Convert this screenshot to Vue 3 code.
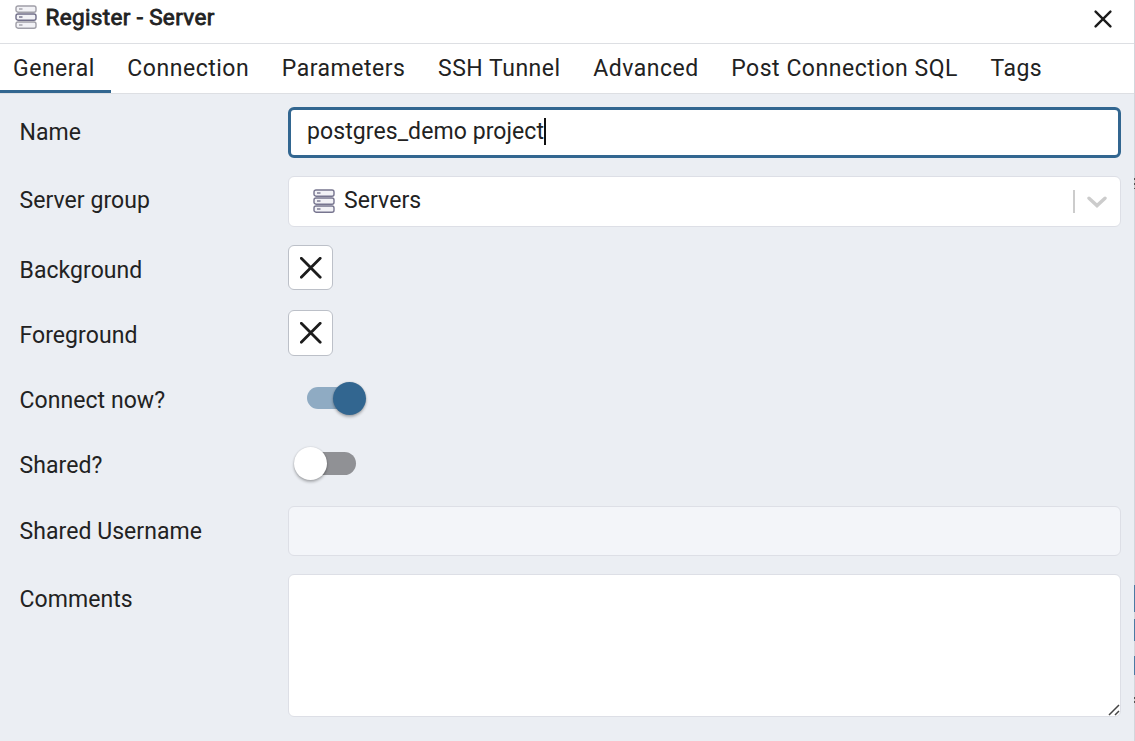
<script setup>
import { ref } from 'vue'

const tabs = ['General', 'Connection', 'Parameters', 'SSH Tunnel', 'Advanced', 'Post Connection SQL', 'Tags']
const active = ref('General')
const serverRows = [1, 9, 17]
</script>

<template>
  <div class="dialog">
    <header class="title-bar">
      <svg class="title-icon" viewBox="0 0 22 24">
        <g v-for="y in serverRows" :key="y">
          <rect x="1" :y="y" width="20" height="6.2" rx="2" />
          <path :d="`M4 ${y + 3}h3.5`" />
        </g>
      </svg>
      <h1 class="title">Register - Server</h1>
      <svg class="close" viewBox="0 0 18 18"><path d="M1.6 1.6 16.4 16.4M16.4 1.6 1.6 16.4" /></svg>
    </header>

    <nav class="tabs">
      <div v-for="tab in tabs" :key="tab" class="tab" :class="{ active: tab === active }" @click="active = tab">{{ tab }}</div>
    </nav>

    <main class="form">
      <div class="label">Name</div>
      <div class="input focused"><span class="value">postgres_demo project</span><i class="caret"></i></div>

      <div class="label raised">Server group</div>
      <div class="input select">
        <svg class="server-icon" viewBox="0 0 22 24">
          <g v-for="y in serverRows" :key="y">
            <rect x="1" :y="y" width="20" height="6.2" rx="2" />
            <path :d="`M4 ${y + 3}h3.5`" />
          </g>
        </svg>
        <span class="servers">Servers</span>
        <i class="divider"></i>
        <svg class="chevron" viewBox="0 0 20 12"><path d="M2 2.2 10 9.6 18 2.2" /></svg>
      </div>

      <div class="label">Background</div>
      <div class="color short"><svg viewBox="0 0 22 22"><path d="M1.3 1.3 20.2 20.2M20.2 1.3 1.3 20.2" /></svg></div>

      <div class="label">Foreground</div>
      <div class="color"><svg viewBox="0 0 22 22"><path d="M1.3 1.3 20.2 20.2M20.2 1.3 1.3 20.2" /></svg></div>

      <div class="label">Connect now?</div>
      <div class="switch on"><i class="knob"></i></div>

      <div class="label raised">Shared?</div>
      <div class="switch off"><i class="knob"></i></div>

      <div class="label">Shared Username</div>
      <div class="input disabled"></div>

      <div class="label">Comments</div>
      <div class="textarea">
        <svg class="grip" viewBox="0 0 12 12"><path d="M1 11 11 1M7 11 11 7" /></svg>
      </div>
    </main>

    <i class="behind text-a"></i>
    <i class="behind button-a"></i>
    <i class="behind button-b"></i>
    <i class="behind button-c"></i>
    <i class="behind text-b"></i>
  </div>
</template>

<style>
body {
  overflow: hidden;
}
</style>

<style scoped>
.dialog {
  position: relative;
  box-sizing: border-box;
  width: 1135px;
  height: 741px;
  display: flex;
  flex-direction: column;
  background: #ebeef3;
  border-right: 1px solid #d3d6dc;
  font-family: Roboto, sans-serif;
  font-size: 23px;
  color: #222;
}
.title-bar {
  box-sizing: border-box;
  height: 44px;
  display: flex;
  align-items: center;
  padding: 0 22px 9px 15px;
  background: #fff;
  border-bottom: 1px solid #dddfe3;
}
.title-icon,
.server-icon {
  width: 22px;
  height: 24px;
  fill: #f2f2f6;
  stroke: #77758f;
  stroke-width: 1.4;
}
.title-icon {
  stroke: #a09fa8;
}
.title-icon g:nth-child(2) {
  stroke: #706e88;
}
.title {
  flex: 1;
  margin: 0 0 0 8.5px;
  font-size: 22.5px;
  font-weight: 400;
  -webkit-text-stroke: 0.8px #222;
  letter-spacing: 0.35px;
  line-height: 26px;
}
.close {
  width: 18px;
  height: 18px;
  margin-top: 3px;
  fill: none;
  stroke: #1c1c1c;
  stroke-width: 2.4;
  stroke-linecap: round;
}
.tabs {
  box-sizing: border-box;
  height: 50px;
  display: flex;
  background: #fff;
  border-bottom: 1px solid #dddfe3;
}
.tab {
  box-sizing: border-box;
  height: 49px;
  padding: 0 16.25px;
  line-height: 49px;
  letter-spacing: 0.52px;
  white-space: nowrap;
}
.tab:first-child {
  padding-left: 13px;
}
.tab.active {
  border-bottom: 3px solid #326690;
}
.form {
  display: grid;
  grid-template-columns: 268.5px 833px;
  grid-template-rows: 69px 69px 65px 65px 66px 65px 68px 143px;
  padding: 13px 0 0 19.5px;
}
.label {
  padding-top: 1px;
  line-height: 50px;
  letter-spacing: 0.06px;
}
.label.raised {
  padding-top: 0;
}
.input {
  box-sizing: border-box;
  height: 51px;
  display: flex;
  align-items: center;
  background: #fff;
  border: 1px solid #dddfe6;
  border-radius: 6px;
  letter-spacing: 0.08px;
}
.focused {
  border: 3px solid #326690;
  padding: 0 0 2px 16px;
}
.caret {
  width: 2px;
  height: 27px;
  background: #111;
}
.select {
  padding: 0 13px 0 24px;
}
.server-icon {
  margin-bottom: 2px;
}
.servers {
  flex: 1;
  margin: 0 0 2px 9px;
}
.divider {
  width: 2px;
  height: 23px;
  background: #ccc;
}
.chevron {
  width: 20px;
  height: 12px;
  margin-left: 12px;
  fill: none;
  stroke: #ccc;
  stroke-width: 3.4;
  stroke-linecap: round;
}
.disabled {
  height: 50px;
  background: #f3f5f9;
}
.color {
  box-sizing: border-box;
  width: 45px;
  height: 46px;
  display: flex;
  align-items: center;
  justify-content: center;
  background: #fff;
  border: 1px solid #bcc0c8;
  border-radius: 6px;
  padding-bottom: 1px;
}
.color.short {
  height: 45px;
  padding-bottom: 0;
}
.color svg {
  width: 22px;
  height: 22px;
  fill: none;
  stroke: #1c1c1c;
  stroke-width: 2.8;
  stroke-linecap: round;
}
.switch {
  width: 55px;
  height: 23px;
  display: flex;
  align-items: center;
  border-radius: 12px;
}
.knob {
  flex: none;
  width: 33px;
  height: 33px;
  border-radius: 50%;
  box-shadow: 0 2px 3px rgba(0, 0, 0, 0.28), 0 0 2px rgba(0, 0, 0, 0.15);
}
.on {
  height: 22px;
  margin: 12px 0 0 19px;
  background: #8fabc3;
}
.on .knob {
  margin-left: 26px;
  background: #326690;
}
.off {
  margin: 11px 0 0 13px;
  background: #909195;
}
.off .knob {
  margin-left: -7px;
  background: #fff;
}
.textarea {
  box-sizing: border-box;
  height: 143px;
  display: flex;
  align-items: flex-end;
  justify-content: flex-end;
  background: #fff;
  border: 1px solid #dddfe6;
  border-radius: 6px;
}
.grip {
  width: 12px;
  height: 12px;
  fill: none;
  stroke: #444;
  stroke-width: 1.5;
}
.behind {
  position: absolute;
  right: -1px;
  width: 1px;
  background: #4b7ba3;
}
.text-a {
  top: 178px;
  height: 11px;
  background: repeating-linear-gradient(#555 0 2px, #ccc 2px 5px);
}
.button-a {
  top: 585px;
  height: 27px;
}
.button-b {
  top: 619px;
  height: 22px;
}
.button-c {
  top: 656px;
  height: 19px;
}
.text-b {
  top: 697px;
  height: 6px;
  background: repeating-linear-gradient(#555 0 2px, #ccc 2px 4px);
}
</style>
